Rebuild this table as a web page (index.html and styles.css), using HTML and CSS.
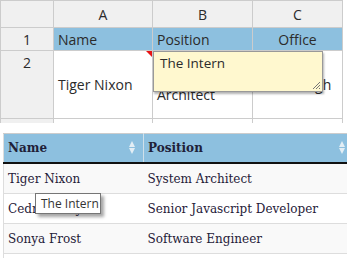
FILE: index.html
```html
<!DOCTYPE html>
<html>
<head>
<meta charset="utf-8">
<link rel="stylesheet" href="styles.css">
</head>
<body>
<div class="sheet">
  <table class="grid">
    <colgroup>
      <col class="c-row"><col class="c-a"><col class="c-b"><col class="c-c"><col class="c-rest">
    </colgroup>
    <thead>
      <tr class="col-heads">
        <th class="corner"></th><th>A</th><th>B</th><th>C</th><th class="blank"></th>
      </tr>
    </thead>
    <tbody>
      <tr class="r1">
        <th>1</th>
        <td class="hl">Name</td>
        <td class="hl">Position</td>
        <td class="hl center">Office</td>
        <td class="blank"></td>
      </tr>
      <tr class="r2">
        <th>2</th>
        <td class="has-comment">Tiger Nixon<span class="flag"></span></td>
        <td>System Architect</td>
        <td class="center">Edinburgh</td>
        <td class="blank"></td>
      </tr>
      <tr class="r3">
        <th></th><td></td><td></td><td></td><td class="blank"></td>
      </tr>
    </tbody>
  </table>
  <div class="comment">
    <div class="comment-text">The Intern</div>
    <svg class="grip" width="9" height="9" viewBox="0 0 9 9">
      <path d="M8 1 L1 8 M8 4 L4 8 M8 7 L7 8" stroke="#777" stroke-width="1" fill="none"/>
    </svg>
  </div>
</div>

<div class="dt-wrap">
  <table class="dt">
    <colgroup>
      <col class="w-name"><col>
    </colgroup>
    <thead>
      <tr>
        <th class="col-name">Name<span class="sort"></span></th>
        <th class="col-pos">Position<span class="sort"></span></th>
      </tr>
    </thead>
    <tbody>
      <tr class="odd"><td>Tiger Nixon</td><td>System Architect</td></tr>
      <tr class="even"><td>Cedric Kelly</td><td>Senior Javascript Developer</td></tr>
      <tr class="odd"><td>Sonya Frost</td><td>Software Engineer</td></tr>
      <tr class="even"><td>&nbsp;</td><td>&nbsp;</td></tr>
    </tbody>
  </table>
  <div class="tip">The Intern</div>
</div>
</body>
</html>
```

FILE: styles.css
```css
html, body {
  margin: 0;
  padding: 0;
  background: #fff;
  overflow: hidden;
}

body {
  width: 347px;
  height: 258px;
}

/* spreadsheet */
.sheet {
  position: relative;
  height: 123px;
  overflow: hidden;
  font-family: "Open Sans", sans-serif;
  font-size: 14px;
  color: #2b2b2b;
}

.grid {
  border-collapse: collapse;
  table-layout: fixed;
  width: 360px;
}

.c-row { width: 53px; }
.c-a { width: 99px; }
.c-b { width: 100px; }
.c-c { width: 90px; }
.c-rest { width: 18px; }

.grid th,
.grid td {
  border: 1px solid #ccc;
  padding: 0 4px;
  white-space: normal;
  overflow: hidden;
}

.grid th {
  background: #f0f0f0;
  font-weight: normal;
  text-align: center;
  color: #2b2b2b;
}

.col-heads th {
  height: 26px;
}

.grid td.blank,
.grid th.blank {
  border: none;
  background: #fff;
  border-left: 1px solid #ccc;
}

.col-heads th.blank {
  background: #fff;
  border-top: none;
}

.r1 th, .r1 td {
  height: 22px;
}

.r1 td.hl {
  background: #8dc0df;
}

.r2 th {
  vertical-align: top;
  padding-top: 2px;
}

.r2 td {
  height: 67px;
  vertical-align: middle;
  line-height: 20px;
}

.r3 th, .r3 td {
  height: 22px;
}

.center {
  text-align: center;
}

.has-comment {
  position: relative;
}

.flag {
  position: absolute;
  top: 0;
  right: 0;
  width: 0;
  height: 0;
  border-top: 6px solid #e81313;
  border-left: 6px solid transparent;
}

.comment {
  position: absolute;
  left: 153px;
  top: 51px;
  width: 168px;
  height: 39px;
  background: #fff8cf;
  border: 1px solid #999;
  box-shadow: 1px 2px 2px rgba(0, 0, 0, 0.3);
}

.comment-text {
  padding: 2px 0 0 6px;
  font-size: 13.5px;
  line-height: 18px;
}

.grip {
  position: absolute;
  right: 1px;
  bottom: 1px;
}

/* data table */
.dt-wrap {
  position: relative;
  margin: 10px 0 0 3px;
  font-family: "DejaVu Serif", serif;
  font-size: 12px;
  color: #1f2038;
}

.dt {
  border-collapse: collapse;
  width: 360px;
  table-layout: fixed;
}

.w-name { width: 140px; }

.dt th {
  position: relative;
  height: 28px;
  background: #8dc0df;
  border-top: 1px solid #ccc;
  border-bottom: 2px solid #111;
  text-align: left;
  padding: 0 4px;
  font-weight: bold;
}

.dt th.col-name {
  border-left: 1px solid #ddd;
  border-right: 1px solid #cfe0ea;
}

.sort {
  position: absolute;
  right: 7px;
  top: 50%;
  width: 7px;
  height: 13px;
  margin-top: -7px;
}

.sort::before,
.sort::after {
  content: "";
  position: absolute;
  left: 0;
  border-left: 3.5px solid transparent;
  border-right: 3.5px solid transparent;
}

.sort::before {
  top: 0;
  border-bottom: 6px solid #e3eef5;
}

.sort::after {
  bottom: 0;
  border-top: 6px solid #e3eef5;
}

.dt .col-pos .sort {
  right: 17px;
}

.dt td {
  height: 29px;
  padding: 0 4px;
  border-top: 1px solid #ddd;
  white-space: nowrap;
}

.dt td:first-child {
  border-left: 1px solid #ddd;
}

.dt tr.odd td {
  background: #f9f9f9;
}

.tip {
  position: absolute;
  left: 32px;
  top: 60px;
  width: 59px;
  height: 19px;
  padding-left: 5px;
  background: #fff;
  border: 1px solid #767676;
  box-shadow: 3px 3px 3px rgba(0, 0, 0, 0.35);
  font-family: "Open Sans", sans-serif;
  font-size: 12px;
  line-height: 19px;
  color: #333;
}
```
